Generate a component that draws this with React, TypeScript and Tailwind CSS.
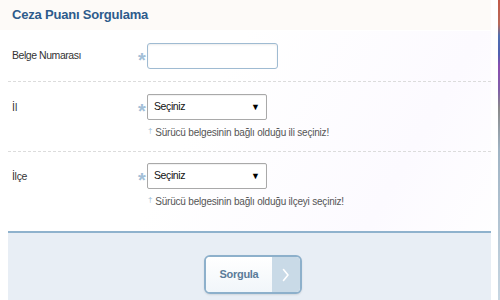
import React from "react";

const font = { fontFamily: '"Liberation Sans", Arial, sans-serif' };

function Star() {
  return (
    <span className="w-[10px] pt-[7px] text-center text-[20px] font-bold leading-none text-[#a3c0d8]">*</span>
  );
}

function Hint({ text }: { text: string }) {
  return (
    <div className="mt-[7px] flex items-start pl-[1px] text-[10px] leading-[12px] tracking-[-0.2px] text-[#555]">
      <span className="mr-[3px] text-[8px] leading-[8px] text-[#9dbcd6]">†</span>
      {text}
    </div>
  );
}

function SelectBox() {
  return (
    <div className="flex h-[26px] w-[120px] items-center justify-between rounded-[2px] border border-[#a9a9a9] bg-white pl-[6px] pr-[6px] shadow-[inset_0_1px_1px_rgba(0,0,0,0.06)]">
      <span className="text-[10.5px] tracking-[-0.4px] text-[#111]">Seçiniz</span>
      <span className="text-[9px] leading-none text-black">▼</span>
    </div>
  );
}

export default function App() {
  return (
    <div className="flex h-[300px] w-[500px] overflow-hidden bg-white" style={font}>
      <div className="flex w-[491px] flex-col bg-[linear-gradient(120deg,#ffffff_40%,#fcfaff_75%,#ffffff)]">
        {/* Başlık */}
        <div className="flex h-[31px] items-center border-b border-white bg-[#fdfaf8] pl-[12px]">
          <h1 className="text-[13px] font-bold tracking-[-0.2px] text-[#2d5b8c]">Ceza Puanı Sorgulama</h1>
        </div>

        <div className="ml-[8px] flex flex-1 flex-col">
          {/* Belge Numarası */}
          <div className="flex h-[51px] items-start border-b border-dashed border-[#dcdcdc] pt-[12px]">
            <div className="flex h-[26px] w-[129px] items-center pl-[4px] text-[10.5px] tracking-[-0.45px] text-[#333]">
              Belge Numarası
            </div>
            <Star />
            <div className="h-[26px] w-[131px] rounded-[3px] border border-[#9fbbd2] bg-white shadow-[inset_0_1px_2px_rgba(0,0,0,0.08)]" />
          </div>

          {/* İl */}
          <div className="flex h-[70px] items-start border-b border-dashed border-[#dcdcdc] pt-[12px]">
            <div className="flex h-[26px] w-[129px] items-center pl-[4px] pt-[2px] text-[10.5px] text-[#333]">İl</div>
            <Star />
            <div className="flex flex-col">
              <SelectBox />
              <Hint text="Sürücü belgesinin bağlı olduğu ili seçiniz!" />
            </div>
          </div>

          {/* İlçe */}
          <div className="flex h-[79px] items-start pt-[11px]">
            <div className="flex h-[26px] w-[129px] items-center pl-[4px] pt-[2px] text-[10.5px] tracking-[-0.3px] text-[#333]">İlçe</div>
            <Star />
            <div className="flex flex-col">
              <SelectBox />
              <Hint text="Sürücü belgesinin bağlı olduğu ilçeyi seçiniz!" />
            </div>
          </div>

          {/* Alt bölüm */}
          <div className="flex flex-1 justify-center border-t-2 border-[#8fb2cd] bg-[#e8eef5] pl-[7px] pt-[22px]">
            <button className="flex h-[39px] w-[98px] overflow-hidden rounded-[6px] border-2 border-[#8db0cb] bg-white shadow-[0_1px_2px_rgba(0,0,0,0.1)]">
              <span className="flex h-full flex-1 items-center justify-center bg-[linear-gradient(#ffffff,#f1f6fa)] text-[11px] font-bold tracking-[-0.3px] text-[#5b7c99]">
                Sorgula
              </span>
              <span className="flex h-full w-[28px] items-center justify-center bg-[#c9dae7]">
                <svg width="8" height="14" viewBox="0 0 8 14" fill="none">
                  <path d="M1.5 1.5 L6 7 L1.5 12.5" stroke="#ffffff" strokeWidth="1.6" strokeLinecap="round" strokeLinejoin="round" />
                </svg>
              </span>
            </button>
          </div>
        </div>
      </div>
      <div className="w-[7px] bg-white" />
      <div className="w-[2px] bg-[linear-gradient(#c25a4a_0%,#b86a5a_8%,#4f6fb0_12%,#5060b0_18%,#8a4fb0_22%,#8060a8_30%,#8a8a8a_36%,#a0b4c4_50%,#c7d6e2_100%)]" />
    </div>
  );
}
